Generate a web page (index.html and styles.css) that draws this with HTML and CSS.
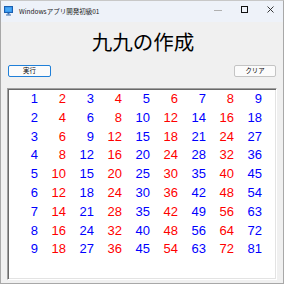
FILE: index.html
```html
<!DOCTYPE html>
<html lang="ja">
<head>
<meta charset="utf-8">
<title>九九の作成</title>
<link rel="stylesheet" href="styles.css">
</head>
<body>
<div class="window">
  <div class="titlebar">
    <svg class="appicon" width="9" height="10" viewBox="0 0 9 10">
      <rect x="0.5" y="0.5" width="8" height="6" fill="#2e8ce6" stroke="#1a5fb0" stroke-width="1"/>
      <rect x="1.5" y="1.5" width="6" height="4" fill="#4aa8f5"/>
      <rect x="3.5" y="7" width="2" height="1.5" fill="#3a6fb0"/>
      <rect x="2" y="8.5" width="5" height="1" fill="#3a6fb0"/>
    </svg>
    <span class="title">Windowsアプリ開発初級01</span>
    <div class="controls">
      <span class="ctl"><svg width="8" height="8" viewBox="0 0 8 8"><line x1="0" y1="4.5" x2="8" y2="4.5" stroke="#b0b0b0" stroke-width="1"/></svg></span>
      <span class="ctl"><svg width="7" height="7" viewBox="0 0 7 7"><rect x="0.5" y="0.5" width="6" height="6" fill="none" stroke="#111" stroke-width="1"/></svg></span>
      <span class="ctl"><svg width="7" height="7" viewBox="0 0 7 7"><path d="M0.5 0.5 L6.5 6.5 M6.5 0.5 L0.5 6.5" stroke="#222" stroke-width="0.9"/></svg></span>
    </div>
  </div>
  <div class="client">
    <h1 class="heading">九九の作成</h1>
    <div class="buttons">
      <button class="btn btn-default">実行</button>
      <button class="btn">クリア</button>
    </div>
    <div class="panel">
      <div class="grid">
        <span class="num odd">1</span><span class="num even">2</span><span class="num odd">3</span><span class="num even">4</span><span class="num odd">5</span><span class="num even">6</span><span class="num odd">7</span><span class="num even">8</span><span class="num odd">9</span>
        <span class="num odd">2</span><span class="num even">4</span><span class="num odd">6</span><span class="num even">8</span><span class="num odd">10</span><span class="num even">12</span><span class="num odd">14</span><span class="num even">16</span><span class="num odd">18</span>
        <span class="num odd">3</span><span class="num even">6</span><span class="num odd">9</span><span class="num even">12</span><span class="num odd">15</span><span class="num even">18</span><span class="num odd">21</span><span class="num even">24</span><span class="num odd">27</span>
        <span class="num odd">4</span><span class="num even">8</span><span class="num odd">12</span><span class="num even">16</span><span class="num odd">20</span><span class="num even">24</span><span class="num odd">28</span><span class="num even">32</span><span class="num odd">36</span>
        <span class="num odd">5</span><span class="num even">10</span><span class="num odd">15</span><span class="num even">20</span><span class="num odd">25</span><span class="num even">30</span><span class="num odd">35</span><span class="num even">40</span><span class="num odd">45</span>
        <span class="num odd">6</span><span class="num even">12</span><span class="num odd">18</span><span class="num even">24</span><span class="num odd">30</span><span class="num even">36</span><span class="num odd">42</span><span class="num even">48</span><span class="num odd">54</span>
        <span class="num odd">7</span><span class="num even">14</span><span class="num odd">21</span><span class="num even">28</span><span class="num odd">35</span><span class="num even">42</span><span class="num odd">49</span><span class="num even">56</span><span class="num odd">63</span>
        <span class="num odd">8</span><span class="num even">16</span><span class="num odd">24</span><span class="num even">32</span><span class="num odd">40</span><span class="num even">48</span><span class="num odd">56</span><span class="num even">64</span><span class="num odd">72</span>
        <span class="num odd">9</span><span class="num even">18</span><span class="num odd">27</span><span class="num even">36</span><span class="num odd">45</span><span class="num even">54</span><span class="num odd">63</span><span class="num even">72</span><span class="num odd">81</span>
      </div>
    </div>
  </div>
</div>
</body>
</html>
```

FILE: styles.css
```css
html, body {
  margin: 0;
  padding: 0;
  background: #f0f0f0;
}

.window {
  width: 284px;
  height: 284px;
  box-sizing: border-box;
  border: 1px solid #a8a8a8;
  border-top-color: #c8c8c8;
  background: #f0f0f0;
  display: flex;
  flex-direction: column;
  font-family: "Noto Sans CJK JP", "Noto Sans", sans-serif;
}

.titlebar {
  height: 21px;
  flex: none;
  background: #eef2f9;
  display: flex;
  align-items: center;
  padding-left: 3px;
}

.appicon {
  display: block;
  margin-right: 6px;
  margin-top: -1px;
}

.title {
  font-size: 6.5px;
  color: #1a1a1a;
  line-height: 1;
  margin-top: -1px;
}

.controls {
  margin-left: auto;
  display: flex;
  height: 100%;
}

.ctl {
  width: 26px;
  height: 100%;
  display: flex;
  align-items: center;
  justify-content: center;
  margin-top: -2px;
}

.client {
  flex: 1;
  display: flex;
  flex-direction: column;
  padding: 9px 5px 2px 6px;
}

.heading {
  margin: 0;
  font-size: 20.5px;
  line-height: 21px;
  font-weight: 400;
  text-align: center;
  color: #000;
  padding-left: 1px;
}

.buttons {
  display: flex;
  justify-content: space-between;
  margin-top: 13px;
  padding-left: 1px;
  padding-right: 2px;
}

.btn {
  width: 42px;
  height: 12px;
  padding: 0;
  box-sizing: border-box;
  border: 1px solid #c4c4c4;
  border-radius: 2px;
  background: #fbfbfb;
  font-family: "Noto Sans CJK JP", sans-serif;
  font-size: 6.4px;
  line-height: 10px;
  color: #000;
}

.btn-default {
  width: 43px;
  border-color: #1f7fd8;
}

.panel {
  margin-top: 11px;
  width: 270px;
  height: 192px;
  box-sizing: border-box;
  background: #fff;
  border-top: 1px solid #a0a0a0;
  border-left: 1px solid #a0a0a0;
  border-right: 1px solid #fff;
  border-bottom: 1px solid #fff;
  box-shadow: inset 1px 1px 0 #696969, inset -1px -1px 0 #e3e3e3;
  padding: 1px 0 0 2px;
}

.grid {
  display: grid;
  grid-template-columns: repeat(9, 28px);
  grid-auto-rows: 18.8px;
  font-family: "Liberation Sans", Arial, sans-serif;
  font-size: 13px;
  line-height: 18.8px;
}

.num {
  text-align: right;
}

.odd { color: #0000ff; }
.even { color: #ff0000; }
```
